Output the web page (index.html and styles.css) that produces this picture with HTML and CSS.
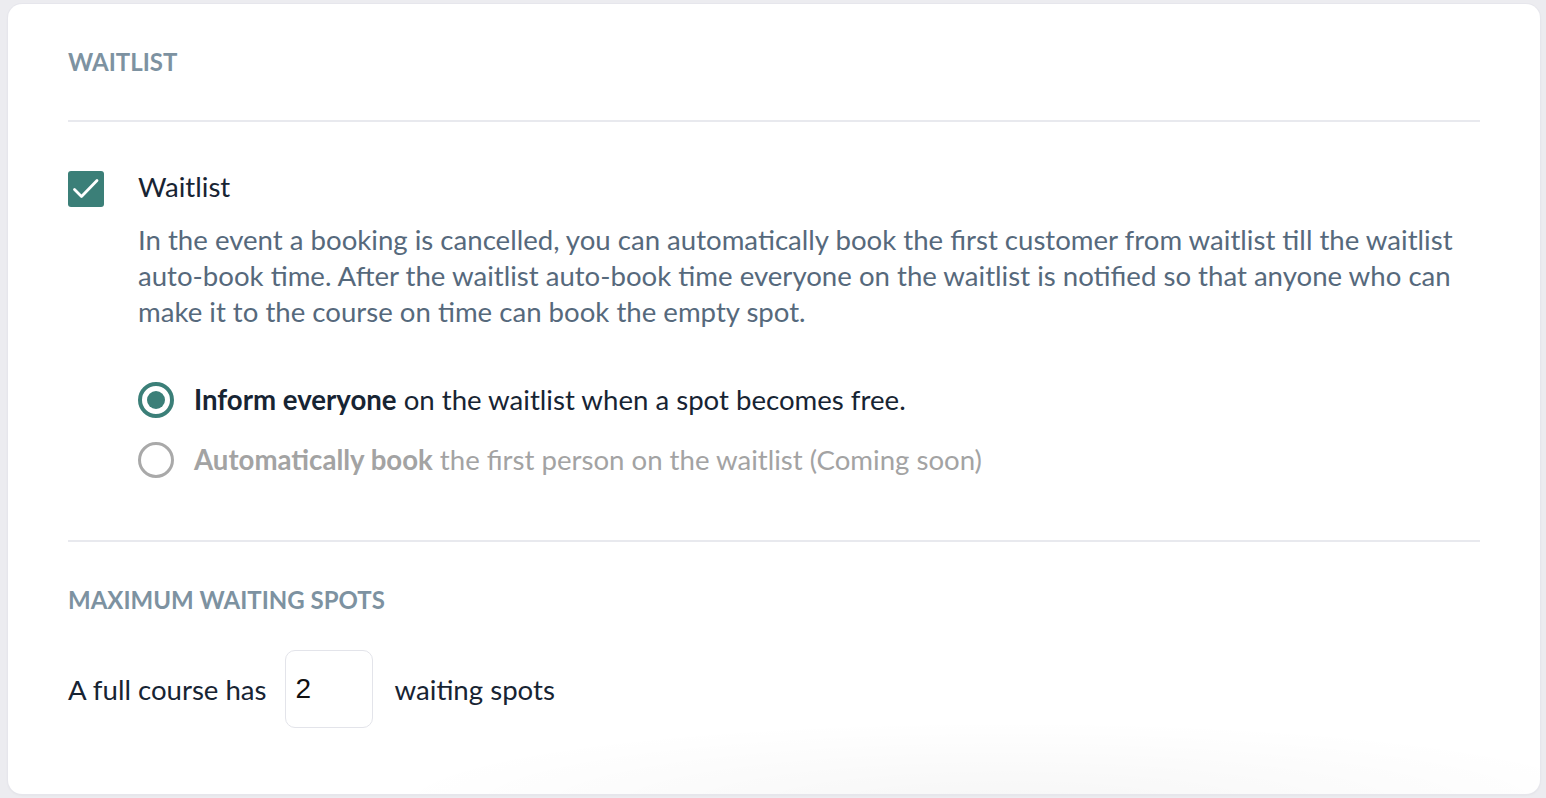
FILE: index.html
```html
<!DOCTYPE html>
<html>
<head>
<meta charset="utf-8">
<link rel="stylesheet" href="styles.css">
</head>
<body>
<div class="card">
  <h2 class="section-title">WAITLIST</h2>
  <hr class="divider">
  <div class="check-row">
    <span class="checkbox">
      <svg width="36" height="36" viewBox="0 0 36 36"><path d="M6.5 18.5 L13.5 25.5 L29 9.5" fill="none" stroke="#fff" stroke-width="2.8" stroke-linecap="round" stroke-linejoin="round"/></svg>
    </span>
    <div class="check-body">
      <div class="check-label">Waitlist</div>
      <p class="desc">In the event a booking is cancelled, you can automatically book the first customer from waitlist till the waitlist auto-book time. After the waitlist auto-book time everyone on the waitlist is notified so that anyone who can make it to the course on time can book the empty spot.</p>
      <div class="radios">
        <div class="radio-row">
          <span class="radio checked"></span>
          <span class="radio-text"><b>Inform everyone</b> on the waitlist when a spot becomes free.</span>
        </div>
        <div class="radio-row disabled">
          <span class="radio"></span>
          <span class="radio-text"><b>Automatically book</b> the first person on the waitlist (Coming soon)</span>
        </div>
      </div>
    </div>
  </div>
  <hr class="divider second">
  <h2 class="section-title small">MAXIMUM WAITING SPOTS</h2>
  <div class="spots-row">
    <span>A full course has</span>
    <span class="num-input">2</span>
    <span>waiting spots</span>
  </div>
</div>
</body>
</html>
```
FILE: styles.css
```css
html, body {
  margin: 0;
  padding: 0;
  background: #ececf0;
}
body {
  padding: 4px 6px 4px 8px;
  font-family: Lato, "Noto Sans", sans-serif;
}
.card {
  background: #fff;
  border-radius: 14px;
  box-shadow: 0 0 0 1px #e6e6ec, 0 1px 3px rgba(0,0,0,0.06);
  padding: 0 60px;
  height: 790px;
  box-sizing: border-box;
  background-image: radial-gradient(ellipse 900px 120px at 1000px 800px, rgba(0,0,0,0.035), rgba(0,0,0,0) 70%);
}
.section-title {
  margin: 0;
  padding-top: 44px;
  font-size: 24px;
  line-height: 28px;
  font-weight: 700;
  color: #7d92a1;
  letter-spacing: 0;
}
.section-title.small {
  padding-top: 44px;
}
.divider {
  border: 0;
  border-top: 2px solid #e8e9ee;
  margin: 44px 0 0;
  height: 0;
}
.divider.second {
  margin-top: 62px;
}
.check-row {
  display: flex;
  gap: 34px;
  margin-top: 49px;
}
.checkbox {
  width: 36px;
  height: 36px;
  flex: none;
  border-radius: 3px;
  background: #3b7f78;
  display: flex;
}
.check-body {
  flex: 1;
}
.check-label {
  font-size: 27.6px;
  line-height: 32px;
  color: #172433;
}
.desc {
  margin: 19px 0 0;
  font-size: 27.6px;
  line-height: 36px;
  color: #56697c;
}
.radios {
  margin-top: 52px;
  display: flex;
  flex-direction: column;
  gap: 24px;
}
.radio-row {
  display: flex;
  align-items: center;
  gap: 20px;
  font-size: 27.6px;
  line-height: 36px;
  color: #172433;
}
.radio-row b {
  font-weight: 700;
}
.radio {
  width: 36px;
  height: 36px;
  box-sizing: border-box;
  border-radius: 50%;
  border: 3px solid #a9a9a9;
  flex: none;
  position: relative;
}
.radio.checked {
  border: 4px solid #3b7f78;
}
.radio.checked::after {
  content: "";
  position: absolute;
  left: 5px;
  top: 5px;
  width: 18px;
  height: 18px;
  border-radius: 50%;
  background: #3b7f78;
}
.radio-row.disabled {
  color: #a3a3a3;
}
.spots-row {
  display: flex;
  align-items: center;
  gap: 18px;
  margin-top: 36px;
  font-size: 27.6px;
  color: #172433;
}
.num-input {
  width: 88px;
  height: 78px;
  box-sizing: border-box;
  border: 1px solid #e3e4ea;
  border-radius: 10px;
  font-family: "Liberation Sans", Arial, sans-serif;
  font-size: 28px;
  color: #111;
  display: flex;
  align-items: center;
  padding-left: 10px;
  margin-right: 4px;
}
```
